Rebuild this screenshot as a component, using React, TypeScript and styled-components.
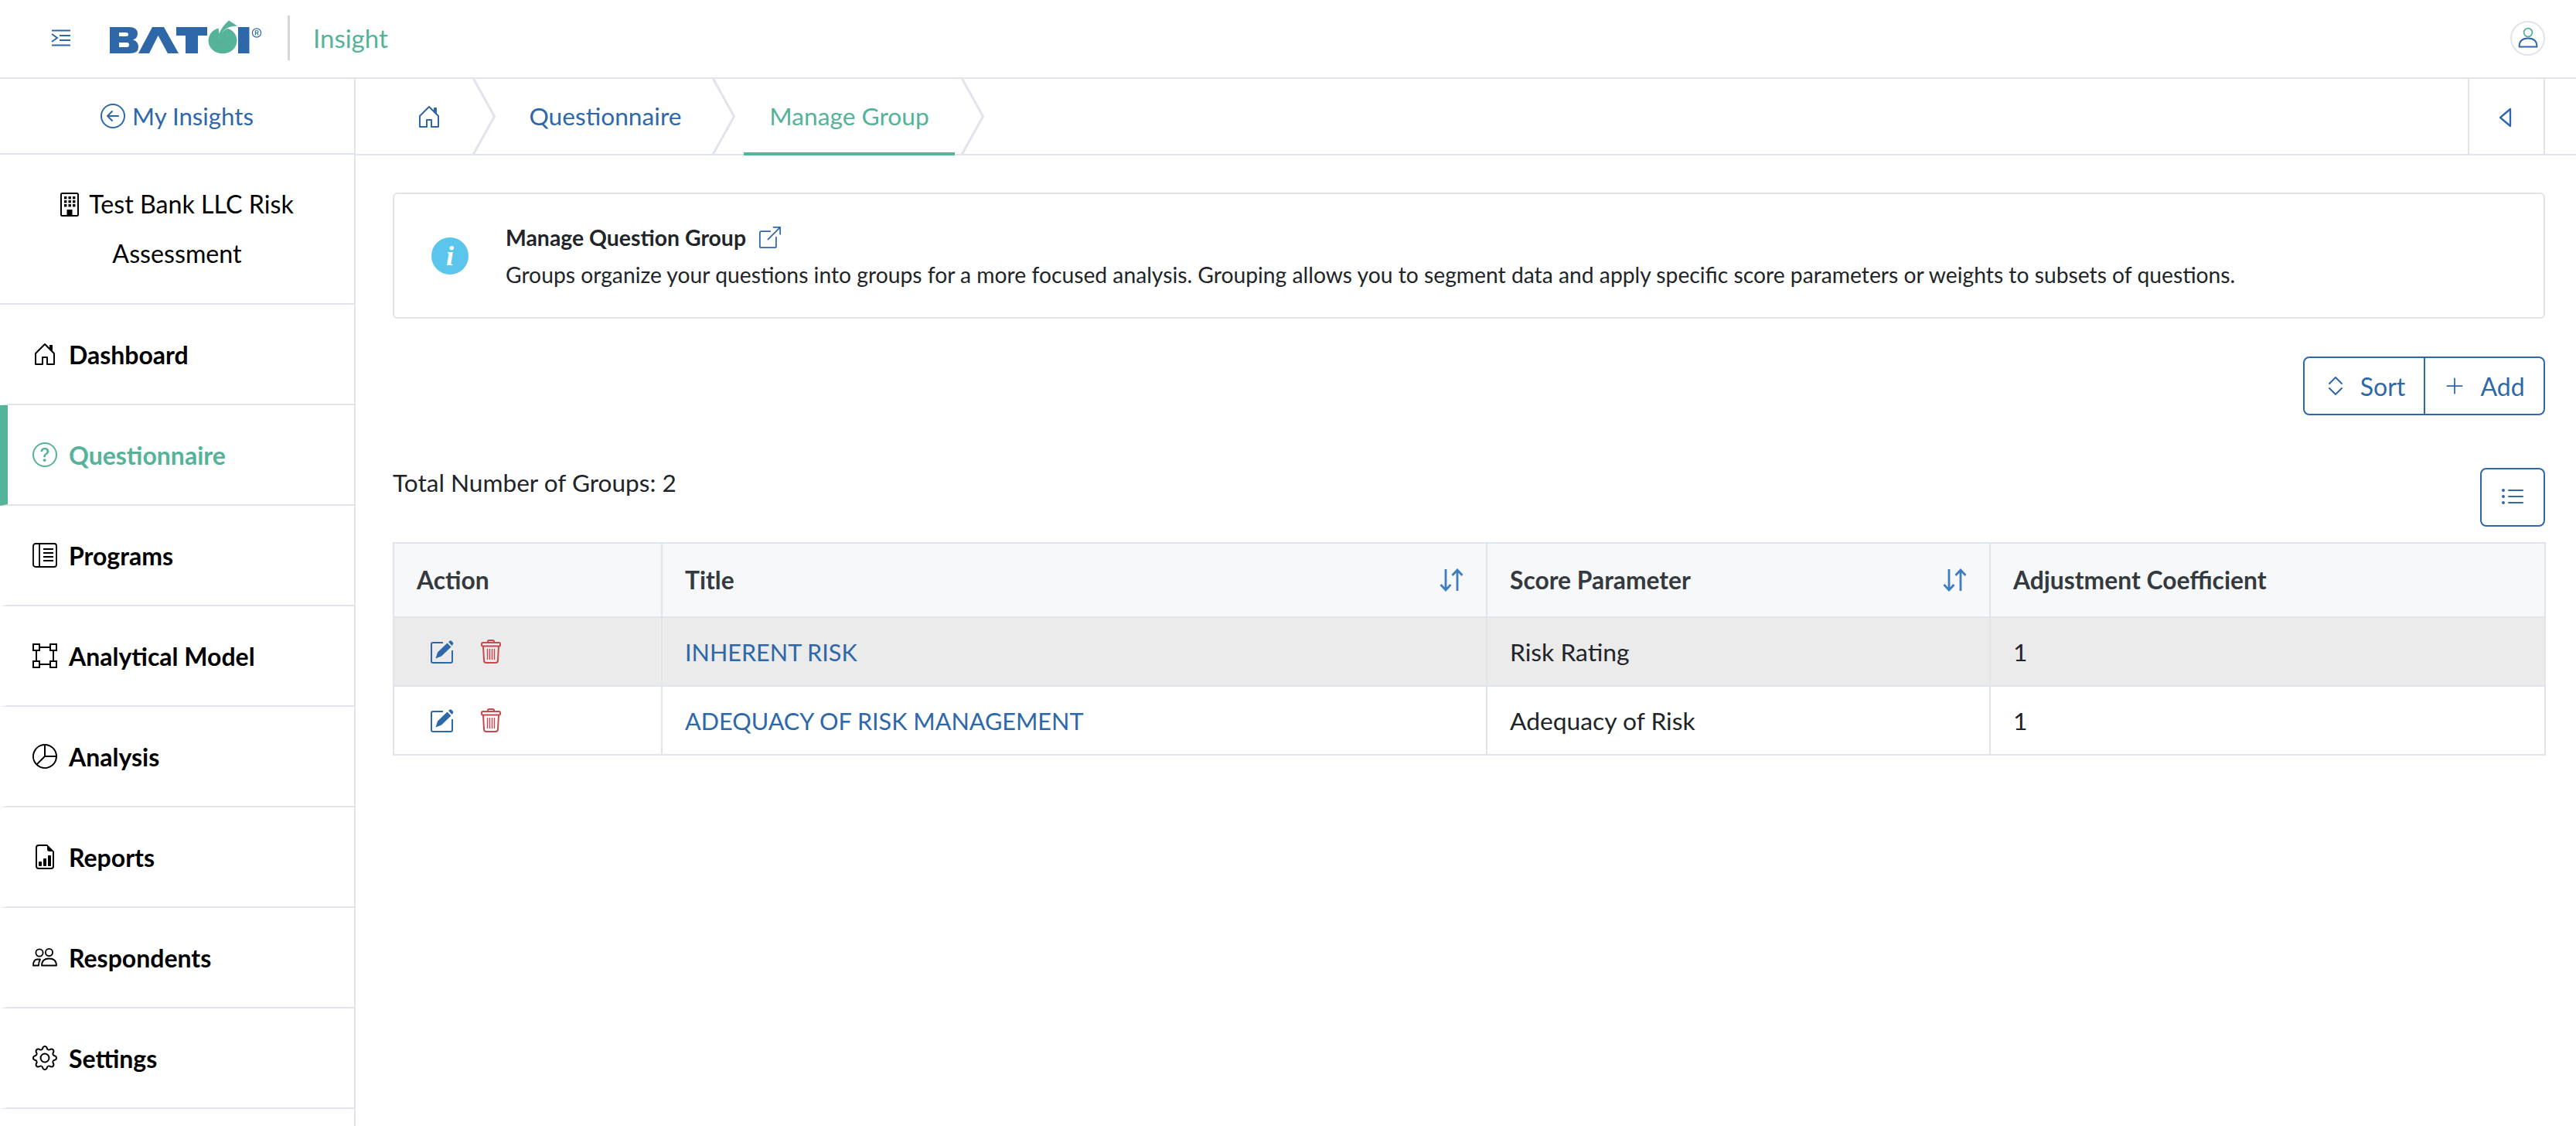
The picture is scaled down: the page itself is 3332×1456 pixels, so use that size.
import React from 'react'
import styled, { createGlobalStyle } from 'styled-components'
import {
  BsArrowLeftCircle,
  BsBoundingBox,
  BsBoxArrowUpRight,
  BsChevronExpand,
  BsFileEarmarkBarGraph,
  BsGear,
  BsHouseDoor,
  BsListUl,
  BsPieChart,
  BsPlusLg,
  BsQuestionCircle,
} from 'react-icons/bs'

const BLUE = '#2f68a8'
const GREEN = '#54b399'
const LINE = '#e1e4ea'
const INK = '#212529'

const GlobalStyle = createGlobalStyle`
  html, body {
    margin: 0;
    padding: 0;
    background: #fff;
  }
  * {
    box-sizing: border-box;
  }
  body {
    font-family: 'Lato', 'Open Sans', sans-serif;
    color: ${INK};
  }
`

const Page = styled.div`
  width: 3332px;
  height: 1456px;
  overflow: hidden;
  display: flex;
  flex-direction: column;
`

const TopBar = styled.header`
  height: 102px;
  flex: none;
  display: flex;
  align-items: center;
  border-bottom: 2px solid ${LINE};
  padding: 0 40px 2px 66px;
`

const Brand = styled.div`
  display: flex;
  align-items: center;
  flex: 1;
`

const LogoWrap = styled.div`
  margin-left: 50px;
  display: flex;
`

const BrandDivider = styled.span`
  width: 3px;
  height: 58px;
  background: #d4d7dc;
  margin: 0 30px 0 32px;
`

const ProductName = styled.span`
  font-size: 33px;
  color: ${GREEN};
`

const Avatar = styled.div`
  width: 45px;
  height: 45px;
  border: 2px solid ${LINE};
  border-radius: 50%;
  display: flex;
  align-items: center;
  justify-content: center;
`

const Body = styled.div`
  flex: 1;
  display: flex;
  min-height: 0;
`

const Sidebar = styled.aside`
  width: 460px;
  flex: none;
  border-right: 2px solid ${LINE};
`

const BackLink = styled.a`
  height: 98px;
  display: flex;
  align-items: center;
  justify-content: center;
  gap: 9px;
  border-bottom: 2px solid ${LINE};
  color: ${BLUE};
  font-size: 31.2px;
`

const OrgBlock = styled.div`
  height: 194px;
  border-bottom: 2px solid ${LINE};
  padding: 32px 60px 0;
  text-align: center;
  font-size: 32.2px;
  line-height: 64px;
  color: #000;
  svg {
    vertical-align: -4px;
    margin-right: 13px;
  }
`

const NavItem = styled.a<{ $active?: boolean }>`
  height: 130px;
  display: flex;
  align-items: center;
  gap: 15px;
  padding-left: 32px;
  border-left: 10px solid ${(p) => (p.$active ? GREEN : 'transparent')};
  border-bottom: 2px solid ${LINE};
  font-size: 32px;
  font-weight: 700;
  color: ${(p) => (p.$active ? GREEN : '#000')};
  svg {
    flex: none;
  }
`

const Main = styled.main`
  flex: 1;
  min-width: 0;
  display: flex;
  flex-direction: column;
`

const CrumbBar = styled.nav`
  height: 99px;
  flex: none;
  display: flex;
  align-items: stretch;
  border-bottom: 2px solid ${LINE};
  padding-left: 79px;
  padding-right: 40px;
`

const HomeCrumb = styled.a`
  display: flex;
  align-items: center;
  margin-right: 40px;
  color: ${BLUE};
`

const Crumb = styled.a<{ $active?: boolean; $width: number }>`
  width: ${(p) => p.$width}px;
  display: flex;
  align-items: center;
  justify-content: center;
  font-size: 31.7px;
  color: ${(p) => (p.$active ? GREEN : BLUE)};
  margin: 0 ${(p) => (p.$active ? '8px' : '6px')} -2px ${(p) => (p.$active ? '11px' : '10px')};
  border-bottom: 4px solid ${(p) => (p.$active ? GREEN : 'transparent')};
`

const CollapseButton = styled.button`
  margin-left: auto;
  width: 100px;
  margin-bottom: -2px;
  background: none;
  border: 0;
  border-left: 2px solid ${LINE};
  border-right: 2px solid ${LINE};
  display: flex;
  align-items: center;
  justify-content: center;
  color: ${BLUE};
  padding: 0 3px 0 0;
`

const Content = styled.section`
  padding: 48px 40px 0 48px;
`

const InfoCard = styled.div`
  height: 163px;
  border: 2px solid ${LINE};
  border-radius: 6px;
  display: flex;
  align-items: center;
  padding-left: 48px;
`

const InfoBadge = styled.span`
  width: 48px;
  height: 48px;
  flex: none;
  border-radius: 50%;
  background: #5bc5ec;
  color: #fff;
  display: flex;
  align-items: center;
  justify-content: center;
  font-family: 'Liberation Serif', serif;
  font-style: italic;
  font-weight: 700;
  font-size: 36px;
  margin-right: 48px;
`

const InfoText = styled.div`
  display: flex;
  flex-direction: column;
`

const InfoTitle = styled.div`
  display: flex;
  align-items: center;
  gap: 17px;
  font-size: 28.4px;
  font-weight: 700;
  line-height: 36px;
  color: ${BLUE};
  span {
    color: ${INK};
  }
`

const InfoBody = styled.p`
  margin: 12px 0 0;
  font-size: 28.25px;
  line-height: 36px;
`

const ActionRow = styled.div`
  display: flex;
  justify-content: flex-end;
  margin-top: 49px;
`

const ButtonGroup = styled.div`
  display: flex;
  height: 76px;
  border: 2px solid ${BLUE};
  border-radius: 8px;
`

const GroupButton = styled.button<{ $width: number; $gap: number }>`
  width: ${(p) => p.$width}px;
  display: flex;
  align-items: center;
  justify-content: center;
  gap: ${(p) => p.$gap}px;
  background: none;
  border: 0;
  padding: 0;
  color: ${BLUE};
  font-family: inherit;
  font-size: 32px;
  & + & {
    border-left: 2px solid ${BLUE};
  }
`

const SummaryRow = styled.div`
  display: flex;
  justify-content: space-between;
  margin-top: 68px;
`

const TotalLabel = styled.div`
  font-size: 31.6px;
  line-height: 38px;
`

const ViewButton = styled.button`
  width: 84px;
  height: 76px;
  background: none;
  border: 2px solid ${BLUE};
  border-radius: 8px;
  color: ${BLUE};
  display: flex;
  align-items: center;
  justify-content: center;
  padding: 0;
`

const Table = styled.table`
  width: 2783px;
  margin-top: 20px;
  border-collapse: collapse;
  table-layout: fixed;
  font-size: 31.8px;
`

const HeadCell = styled.th<{ $width: number }>`
  width: ${(p) => p.$width}px;
  height: 96px;
  padding: 0 29px;
  background: #f7f8fa;
  border: 2px solid ${LINE};
  text-align: left;
  font-weight: 700;
  font-size: 31.8px;
  color: #343a40;
`

const HeadInner = styled.div`
  display: flex;
  align-items: center;
  justify-content: space-between;
`

const BodyRow = styled.tr<{ $hover?: boolean }>`
  background: ${(p) => (p.$hover ? '#ebebeb' : '#fff')};
`

const Cell = styled.td`
  height: 89px;
  padding: 0 29px;
  border: 2px solid ${LINE};
`

const RowActions = styled.div`
  display: flex;
  align-items: center;
  gap: 35px;
  padding-left: 18px;
`

const TitleLink = styled.a`
  color: ${BLUE};
  font-size: 30.6px;
`

const LogoMark = () => (
  <svg width="198" height="46" viewBox="0 0 198 46">
    <path
      fill={BLUE}
      fillRule="evenodd"
      d="M0 9H25Q36 9 36 17.5Q36 23.5 30 25.5Q37 27.5 37 35Q37 43 26 43H0ZM12 16V21H21Q24 21 24 18.5Q24 16 21 16ZM12 29V35H22Q25 35 25 32Q25 29 22 29Z"
    />
    <path fill={BLUE} d="M37 43L55 9H70L89 43H75L62.5 20L51 43Z" />
    <path fill={BLUE} d="M86 9H126V20H114V43H98V20H86Z" />
    <ellipse cx="146" cy="26.5" rx="18.5" ry="16.8" fill={GREEN} />
    <path fill="#fff" d="M142 24Q144 14 152 11L170 9L168 2L140 4Z" />
    <path fill={GREEN} d="M141 18Q146 7 154 0.5L165 7.5Q154 8 150 11.5Q144 15 143 24Q141 22 141 18Z" />
    <rect x="166" y="9" width="14.5" height="34" fill={BLUE} />
    <circle cx="190" cy="16.5" r="5.6" fill="none" stroke={BLUE} strokeWidth="1.2" />
    <path fill="none" stroke={BLUE} strokeWidth="1.1" d="M188.4 19.6V13.7H190.6Q192 13.7 192 15.2Q192 16.7 190.4 16.7H188.4M190.6 16.7L192.2 19.6" />
  </svg>
)

const MenuIcon = () => (
  <svg width="26" height="22" viewBox="0 0 26 22" fill="none" stroke={BLUE} strokeWidth="2">
    <path d="M1 1.5H25M11 8H25M11 14H25M1 20.5H25M1 6L8 11L1 16" />
  </svg>
)

const UserIcon = () => (
  <svg width="26" height="28" viewBox="0 0 26 28" fill="none" strokeWidth="1.8">
    <circle cx="13" cy="7" r="5.4" stroke={GREEN} />
    <path stroke={BLUE} d="M1.5 25.5Q1.5 14.5 13 14.5Q24.5 14.5 24.5 25.5Z" strokeLinejoin="round" />
  </svg>
)

const BuildingIcon = () => (
  <svg width="24" height="31" viewBox="0 0 24 31">
    <rect x="1" y="1" width="22" height="29" rx="1.5" fill="none" stroke="#000" strokeWidth="2" />
    {[5, 10, 15].map((y) =>
      [5, 10.5, 16].map((x) => <rect key={`${x}-${y}`} x={x} y={y} width="3.4" height="3.4" fill="#000" />)
    )}
    <rect x="8.5" y="22" width="7" height="8" fill="#000" />
  </svg>
)

const ProgramsIcon = () => (
  <svg width="32" height="32" viewBox="0 0 32 32" fill="none" stroke="#000" strokeWidth="1.8">
    <rect x="1" y="1" width="30" height="30" rx="3" />
    <path d="M9 1V31M14 8H27M14 13H27M14 18H27M14 23H27" />
  </svg>
)

const PeopleIcon = () => (
  <svg width="32" height="24" viewBox="0 0 32 24" fill="none" stroke="#000" strokeWidth="1.8">
    <circle cx="9" cy="6" r="4.6" />
    <circle cx="21.5" cy="5.5" r="4.6" />
    <path strokeLinejoin="round" d="M12 22.5H31Q31 13.5 21.5 13.5Q12 13.5 12 22.5Z" />
    <path strokeLinejoin="round" d="M1 22.5H8Q8 18 10 14.5H6Q1 15 1 22.5Z" />
  </svg>
)

const EditIcon = () => (
  <svg width="30" height="30" viewBox="0 0 30 30" fill="none">
    <path stroke={BLUE} strokeWidth="2" strokeLinejoin="round" d="M16 3H3Q1 3 1 5V27Q1 29 3 29H26Q28 29 28 27V13" />
    <path fill={BLUE} d="M6.5 23.5L9 15.5L21.5 3.5L26.5 8.5L14 20.5ZM23 2L25 0.5Q26 0 27 0.8L29 3Q29.8 4 29 5L27.5 7Z" />
  </svg>
)

const TrashIcon = () => (
  <svg width="26" height="31" viewBox="0 0 26 31" fill="none" stroke="#c9474f" strokeWidth="2">
    <rect x="1" y="4" width="24" height="4.5" rx="1.5" />
    <path d="M9 4V2.5Q9 1 10.5 1H15.5Q17 1 17 2.5V4" />
    <path d="M3 8.5L4 27Q4 30 7 30H19Q22 30 22 27L23 8.5" />
    <path strokeWidth="1.4" d="M8.5 12V26M11.5 12V26M14.5 12V26M17.5 12V26" />
  </svg>
)

const SortArrows = () => (
  <svg width="31" height="30" viewBox="0 0 31 30" fill="none" stroke="#3f7cc0" strokeWidth="2.8">
    <path d="M8 1V28M1.5 21L8 28L14.5 21" />
    <path d="M23 29V2M16.5 9L23 2L29.5 9" />
  </svg>
)

const CaretIcon = () => (
  <svg width="17" height="26" viewBox="0 0 17 26" fill="none" stroke={BLUE} strokeWidth="2.3" strokeLinejoin="round">
    <path d="M15 2V24L2 13Z" />
  </svg>
)

const navItems = [
  { label: 'Dashboard', icon: <BsHouseDoor size={32} /> },
  { label: 'Questionnaire', icon: <BsQuestionCircle size={32} />, active: true },
  { label: 'Programs', icon: <ProgramsIcon /> },
  { label: 'Analytical Model', icon: <BsBoundingBox size={32} /> },
  { label: 'Analysis', icon: <BsPieChart size={32} /> },
  { label: 'Reports', icon: <BsFileEarmarkBarGraph size={32} /> },
  { label: 'Respondents', icon: <PeopleIcon /> },
  { label: 'Settings', icon: <BsGear size={32} /> },
]

const groups = [
  { title: 'INHERENT RISK', score: 'Risk Rating', coefficient: 1 },
  { title: 'ADEQUACY OF RISK MANAGEMENT', score: 'Adequacy of Risk', coefficient: 1 },
]

const Chevron = () => (
  <svg width="30" height="97" viewBox="0 0 30 97" fill="none" stroke={LINE} strokeWidth="3" style={{ flex: 'none' }}>
    <path d="M1 -1L28.5 48.5L1 98" />
  </svg>
)

export default function App() {
  return (
    <Page>
      <GlobalStyle />
      <TopBar>
        <Brand>
          <MenuIcon />
          <LogoWrap>
            <LogoMark />
          </LogoWrap>
          <BrandDivider />
          <ProductName>Insight</ProductName>
        </Brand>
        <Avatar>
          <UserIcon />
        </Avatar>
      </TopBar>
      <Body>
        <Sidebar>
          <BackLink>
            <BsArrowLeftCircle size={32} />
            My Insights
          </BackLink>
          <OrgBlock>
            <BuildingIcon />
            Test Bank LLC Risk Assessment
          </OrgBlock>
          {navItems.map((item) => (
            <NavItem key={item.label} $active={item.active}>
              {item.icon}
              {item.label}
            </NavItem>
          ))}
        </Sidebar>
        <Main>
          <CrumbBar>
            <HomeCrumb>
              <BsHouseDoor size={32} />
            </HomeCrumb>
            <Chevron />
            <Crumb $width={264}>Questionnaire</Crumb>
            <Chevron />
            <Crumb $active $width={273}>
              Manage Group
            </Crumb>
            <Chevron />
            <CollapseButton>
              <CaretIcon />
            </CollapseButton>
          </CrumbBar>
          <Content>
            <InfoCard>
              <InfoBadge>i</InfoBadge>
              <InfoText>
                <InfoTitle>
                  <span>Manage Question Group</span>
                  <BsBoxArrowUpRight size={28} />
                </InfoTitle>
                <InfoBody>
                  Groups organize your questions into groups for a more focused analysis. Grouping allows you to
                  segment data and apply specific score parameters or weights to subsets of questions.
                </InfoBody>
              </InfoText>
            </InfoCard>
            <ActionRow>
              <ButtonGroup>
                <GroupButton $width={154} $gap={16}>
                  <BsChevronExpand size={32} />
                  Sort
                </GroupButton>
                <GroupButton $width={155} $gap={19}>
                  <BsPlusLg size={28} />
                  Add
                </GroupButton>
              </ButtonGroup>
            </ActionRow>
            <SummaryRow>
              <TotalLabel>Total Number of Groups: 2</TotalLabel>
              <ViewButton>
                <BsListUl size={32} />
              </ViewButton>
            </SummaryRow>
            <Table>
              <thead>
                <tr>
                  <HeadCell $width={347}>Action</HeadCell>
                  <HeadCell $width={1067}>
                    <HeadInner>
                      Title
                      <SortArrows />
                    </HeadInner>
                  </HeadCell>
                  <HeadCell $width={651}>
                    <HeadInner>
                      Score Parameter
                      <SortArrows />
                    </HeadInner>
                  </HeadCell>
                  <HeadCell $width={718}>Adjustment Coefficient</HeadCell>
                </tr>
              </thead>
              <tbody>
                {groups.map((group, index) => (
                  <BodyRow key={group.title} $hover={index === 0}>
                    <Cell>
                      <RowActions>
                        <EditIcon />
                        <TrashIcon />
                      </RowActions>
                    </Cell>
                    <Cell>
                      <TitleLink>{group.title}</TitleLink>
                    </Cell>
                    <Cell>{group.score}</Cell>
                    <Cell>{group.coefficient}</Cell>
                  </BodyRow>
                ))}
              </tbody>
            </Table>
          </Content>
        </Main>
      </Body>
    </Page>
  )
}
